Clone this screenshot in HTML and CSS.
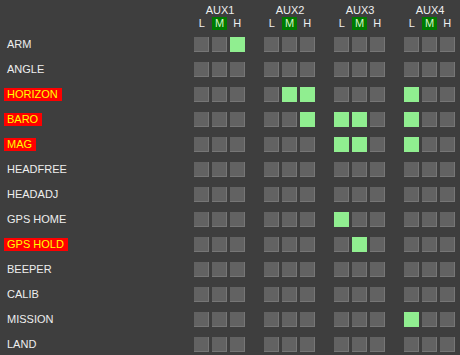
FILE: index.html
```html
<!doctype html>
<html lang="en">
<head>
    <meta charset="UTF-8" />
    <link rel="stylesheet" href="styles.css">
</head>
<body>
    <div class="modes">
        <div class="modes-header">
            <div class="label-col"></div>
            <div class="aux-head">
                <div class="aux-name">AUX1</div>
                <div class="lmh"><span>L</span><span class="mid">M</span><span>H</span></div>
            </div>
            <div class="aux-head">
                <div class="aux-name">AUX2</div>
                <div class="lmh"><span>L</span><span class="mid">M</span><span>H</span></div>
            </div>
            <div class="aux-head">
                <div class="aux-name">AUX3</div>
                <div class="lmh"><span>L</span><span class="mid">M</span><span>H</span></div>
            </div>
            <div class="aux-head">
                <div class="aux-name">AUX4</div>
                <div class="lmh"><span>L</span><span class="mid">M</span><span>H</span></div>
            </div>
        </div>

        <div class="mode-row">
            <div class="label-col"><span class="mode-name">ARM</span></div>
            <div class="aux"><i class="box"></i><i class="box"></i><i class="box on"></i></div>
            <div class="aux"><i class="box"></i><i class="box"></i><i class="box"></i></div>
            <div class="aux"><i class="box"></i><i class="box"></i><i class="box"></i></div>
            <div class="aux"><i class="box"></i><i class="box"></i><i class="box"></i></div>
        </div>
        <div class="mode-row">
            <div class="label-col"><span class="mode-name">ANGLE</span></div>
            <div class="aux"><i class="box"></i><i class="box"></i><i class="box"></i></div>
            <div class="aux"><i class="box"></i><i class="box"></i><i class="box"></i></div>
            <div class="aux"><i class="box"></i><i class="box"></i><i class="box"></i></div>
            <div class="aux"><i class="box"></i><i class="box"></i><i class="box"></i></div>
        </div>
        <div class="mode-row">
            <div class="label-col"><span class="mode-name active">HORIZON</span></div>
            <div class="aux"><i class="box"></i><i class="box"></i><i class="box"></i></div>
            <div class="aux"><i class="box"></i><i class="box on"></i><i class="box on"></i></div>
            <div class="aux"><i class="box"></i><i class="box"></i><i class="box"></i></div>
            <div class="aux"><i class="box on"></i><i class="box"></i><i class="box"></i></div>
        </div>
        <div class="mode-row">
            <div class="label-col"><span class="mode-name active">BARO</span></div>
            <div class="aux"><i class="box"></i><i class="box"></i><i class="box"></i></div>
            <div class="aux"><i class="box"></i><i class="box"></i><i class="box on"></i></div>
            <div class="aux"><i class="box on"></i><i class="box on"></i><i class="box"></i></div>
            <div class="aux"><i class="box on"></i><i class="box"></i><i class="box"></i></div>
        </div>
        <div class="mode-row">
            <div class="label-col"><span class="mode-name active">MAG</span></div>
            <div class="aux"><i class="box"></i><i class="box"></i><i class="box"></i></div>
            <div class="aux"><i class="box"></i><i class="box"></i><i class="box"></i></div>
            <div class="aux"><i class="box on"></i><i class="box on"></i><i class="box"></i></div>
            <div class="aux"><i class="box on"></i><i class="box"></i><i class="box"></i></div>
        </div>
        <div class="mode-row">
            <div class="label-col"><span class="mode-name">HEADFREE</span></div>
            <div class="aux"><i class="box"></i><i class="box"></i><i class="box"></i></div>
            <div class="aux"><i class="box"></i><i class="box"></i><i class="box"></i></div>
            <div class="aux"><i class="box"></i><i class="box"></i><i class="box"></i></div>
            <div class="aux"><i class="box"></i><i class="box"></i><i class="box"></i></div>
        </div>
        <div class="mode-row">
            <div class="label-col"><span class="mode-name">HEADADJ</span></div>
            <div class="aux"><i class="box"></i><i class="box"></i><i class="box"></i></div>
            <div class="aux"><i class="box"></i><i class="box"></i><i class="box"></i></div>
            <div class="aux"><i class="box"></i><i class="box"></i><i class="box"></i></div>
            <div class="aux"><i class="box"></i><i class="box"></i><i class="box"></i></div>
        </div>
        <div class="mode-row">
            <div class="label-col"><span class="mode-name">GPS HOME</span></div>
            <div class="aux"><i class="box"></i><i class="box"></i><i class="box"></i></div>
            <div class="aux"><i class="box"></i><i class="box"></i><i class="box"></i></div>
            <div class="aux"><i class="box on"></i><i class="box"></i><i class="box"></i></div>
            <div class="aux"><i class="box"></i><i class="box"></i><i class="box"></i></div>
        </div>
        <div class="mode-row">
            <div class="label-col"><span class="mode-name active">GPS HOLD</span></div>
            <div class="aux"><i class="box"></i><i class="box"></i><i class="box"></i></div>
            <div class="aux"><i class="box"></i><i class="box"></i><i class="box"></i></div>
            <div class="aux"><i class="box"></i><i class="box on"></i><i class="box"></i></div>
            <div class="aux"><i class="box"></i><i class="box"></i><i class="box"></i></div>
        </div>
        <div class="mode-row">
            <div class="label-col"><span class="mode-name">BEEPER</span></div>
            <div class="aux"><i class="box"></i><i class="box"></i><i class="box"></i></div>
            <div class="aux"><i class="box"></i><i class="box"></i><i class="box"></i></div>
            <div class="aux"><i class="box"></i><i class="box"></i><i class="box"></i></div>
            <div class="aux"><i class="box"></i><i class="box"></i><i class="box"></i></div>
        </div>
        <div class="mode-row">
            <div class="label-col"><span class="mode-name">CALIB</span></div>
            <div class="aux"><i class="box"></i><i class="box"></i><i class="box"></i></div>
            <div class="aux"><i class="box"></i><i class="box"></i><i class="box"></i></div>
            <div class="aux"><i class="box"></i><i class="box"></i><i class="box"></i></div>
            <div class="aux"><i class="box"></i><i class="box"></i><i class="box"></i></div>
        </div>
        <div class="mode-row">
            <div class="label-col"><span class="mode-name">MISSION</span></div>
            <div class="aux"><i class="box"></i><i class="box"></i><i class="box"></i></div>
            <div class="aux"><i class="box"></i><i class="box"></i><i class="box"></i></div>
            <div class="aux"><i class="box"></i><i class="box"></i><i class="box"></i></div>
            <div class="aux"><i class="box on"></i><i class="box"></i><i class="box"></i></div>
        </div>
        <div class="mode-row">
            <div class="label-col"><span class="mode-name">LAND</span></div>
            <div class="aux"><i class="box"></i><i class="box"></i><i class="box"></i></div>
            <div class="aux"><i class="box"></i><i class="box"></i><i class="box"></i></div>
            <div class="aux"><i class="box"></i><i class="box"></i><i class="box"></i></div>
            <div class="aux"><i class="box"></i><i class="box"></i><i class="box"></i></div>
        </div>
    </div>
</body>
</html>
```

FILE: styles.css
```css
body {
    margin: 0;
    padding: 0;
    background-color: #3e3e3e;
    font-family: "Liberation Sans", Arial, sans-serif;
    font-size: 11px;
    color: #eeeeee;
}

.modes {
    width: 460px;
    height: 355px;
    overflow: hidden;
}

.modes-header {
    display: flex;
    gap: 19px;
    padding-top: 3px;
    height: 29px;
}

.mode-row {
    display: flex;
    align-items: center;
    gap: 19px;
    height: 25px;
}

.label-col {
    width: 175px;
    padding-left: 4px;
    flex-shrink: 0;
    margin-right: -4px;
}

.aux-head {
    width: 51px;
}

.aux-name {
    text-align: center;
    line-height: 14px;
    padding-left: 1px;
}

.lmh {
    display: flex;
    gap: 2px;
    line-height: 13px;
}

.lmh span {
    width: 16px;
    text-align: center;
}

.lmh .mid {
    background-color: #007a00;
    color: #d8f5c8;
}

.aux {
    display: flex;
    gap: 3px;
    width: 51px;
}

.box {
    display: block;
    width: 15px;
    height: 15px;
    box-sizing: border-box;
    background-color: #626262;
    border-right: 1px solid #767676;
    border-bottom: 1px solid #767676;
}

.box.on {
    background-color: #90ee90;
    border-color: #90ee90;
}

.mode-name {
    display: inline-block;
    padding: 0 4px 0 3px;
    line-height: 13px;
}

.mode-name.active {
    background-color: #ff0000;
    color: #ffff00;
}
```
